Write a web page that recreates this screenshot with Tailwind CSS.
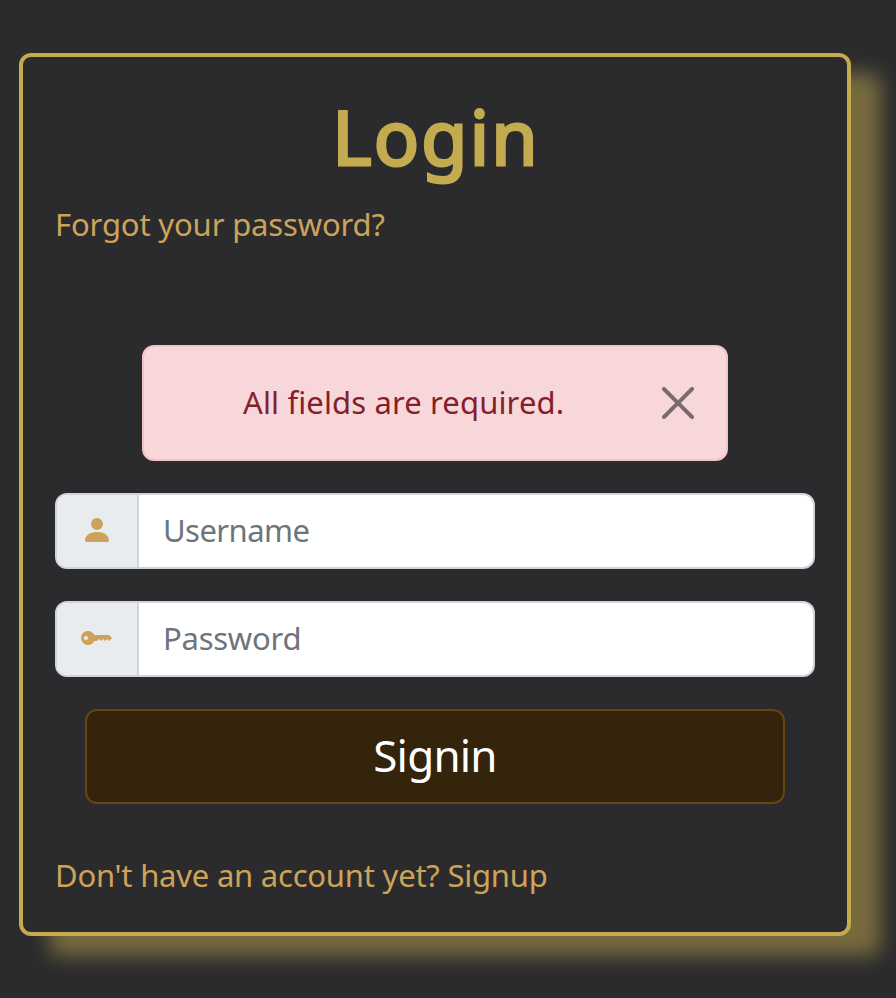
<!DOCTYPE html>
<html lang="en">
<head>
<meta charset="utf-8">
<title>Login</title>
<script src="https://cdn.jsdelivr.net/npm/@tailwindcss/browser@4"></script>
</head>
<body class="bg-[#2b2b2d] h-[998px] overflow-hidden pl-[19px] pt-[53px] font-['Noto_Sans',sans-serif] text-[31px] leading-[48px]">
<main class="w-[832px] h-[883px] border-4 border-[#c4ab50] rounded-xl bg-[#2b2b2d] shadow-[30px_20px_20px_#c4ab5080] px-8 pt-[32px] flex flex-col text-[#cda35a]">
  <h1 class="h-[96px] mt-1 text-center text-[75px] leading-[86px] tracking-[2.2px] pl-[2px] text-[#c4ab50] [-webkit-text-stroke:3px_#c4ab50]">Login</h1>
  <a class="mt-[11px] self-start whitespace-nowrap tracking-[-0.15px]">Forgot your password?</a>
  <div class="mt-[97px] mx-[87px] h-[116px] shrink-0 rounded-xl border-2 border-[#f5c2c7] bg-[#f8d7da] text-[#842029] flex items-center pl-[99px] pr-8">
    <span class="whitespace-nowrap tracking-[0.13px] pb-0.5">All fields are required.</span>
    <svg class="size-8 ml-auto opacity-50" viewBox="0 0 16 16" fill="#000"><path d="M.293.293a1 1 0 0 1 1.414 0L8 6.586 14.293.293a1 1 0 1 1 1.414 1.414L9.414 8l6.293 6.293a1 1 0 0 1-1.414 1.414L8 9.414l-6.293 6.293a1 1 0 0 1-1.414-1.414L6.586 8 .293 1.707a1 1 0 0 1 0-1.414z"/></svg>
  </div>
  <label class="mt-8 h-[76px] shrink-0 flex rounded-xl border-2 border-[#ced4da] bg-white overflow-hidden text-[#6c757d]">
    <span class="w-[82px] border-r-2 border-[#ced4da] bg-[#e9ecef] flex justify-center pt-[19px]"><svg class="size-8" viewBox="0 0 16 16" fill="#cda35a"><path d="M3 14s-1 0-1-1 1-4 6-4 6 3 6 4-1 1-1 1zm5-6a3 3 0 1 0 0-6 3 3 0 0 0 0 6"/></svg></span>
    <span class="pl-6 pt-[11px] tracking-[-0.55px]">Username</span>
  </label>
  <label class="mt-8 h-[76px] shrink-0 flex rounded-xl border-2 border-[#ced4da] bg-white overflow-hidden text-[#6c757d]">
    <span class="w-[82px] border-r-2 border-[#ced4da] bg-[#e9ecef] flex justify-center pt-[19px]"><svg class="size-8" viewBox="0 0 16 16" fill="#cda35a"><path d="M3.5 11.5a3.5 3.5 0 1 1 3.163-5H14L15.5 8 14 9.5l-1-1-1 1-1-1-1 1-1-1-1 1H6.663a3.5 3.5 0 0 1-3.163 2M2.5 9a1 1 0 1 0 0-2 1 1 0 0 0 0 2"/></svg></span>
    <span class="pl-6 pt-[11px] tracking-[-0.25px]">Password</span>
  </label>
  <button class="mt-8 mx-[30px] h-[95px] shrink-0 rounded-xl border-2 border-[#664510] bg-[#33240b] text-white text-[44px] leading-[60px] tracking-[-0.8px] pb-[3px]">Signin</button>
  <a class="mt-[47px] self-start whitespace-nowrap tracking-[-0.22px]">Don't have an account yet? Signup</a>
</main>
</body>
</html>
